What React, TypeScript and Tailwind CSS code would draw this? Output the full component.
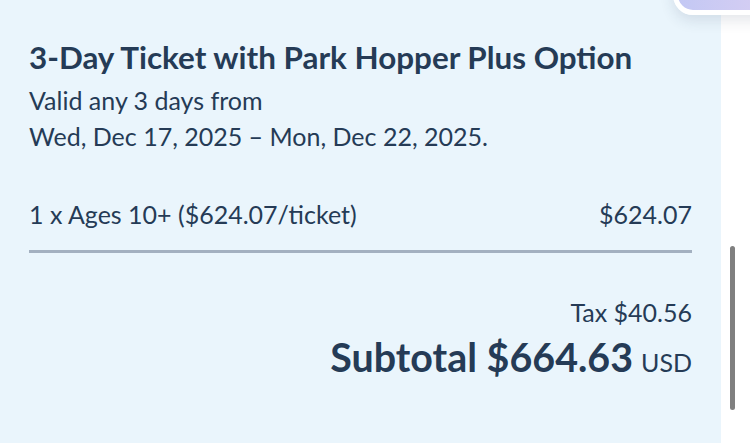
import React from "react";

export default function App() {
  return (
    <div className="relative w-[750px] h-[443px] overflow-hidden bg-white flex" style={{ fontFamily: "Lato, 'Noto Sans', sans-serif" }}>
      <div className="w-[721px] h-full bg-[#eaf5fc] px-[29px] pt-[39px] text-[#253b56]">
        <h1 className="text-[31.4px] font-bold leading-[36px]">3-Day Ticket with Park Hopper Plus Option</h1>
        <p className="text-[25px] leading-[36px] mt-[7px]">Valid any 3 days from</p>
        <p className="text-[25px] leading-[36px]">Wed, Dec 17, 2025 – Mon, Dec 22, 2025.</p>
        <div className="flex justify-between text-[25px] leading-[36px] mt-[42px]">
          <span>1 x Ages 10+ ($624.07/ticket)</span>
          <span>$624.07</span>
        </div>
        <div className="h-[3px] bg-[#a3b0c0] mt-[18px]" />
        <div className="flex flex-col items-end mt-[41px]">
          <div className="text-[25px] leading-[36px]">Tax $40.56</div>
          <div className="flex items-baseline gap-[8px] mt-[5px]">
            <span className="text-[39.4px] font-bold leading-[44px]">Subtotal $664.63</span>
            <span className="text-[25px]">USD</span>
          </div>
        </div>
      </div>
      <div className="flex-1 relative">
        <div className="absolute left-[9px] top-[246px] w-[5px] h-[164px] rounded-full bg-[#808080]" />
      </div>
      <div className="absolute left-[673px] top-[-40px] w-[130px] h-[55px] rounded-[20px] border-[5px] border-white bg-gradient-to-r from-[#c3c8f4] to-[#ddd0f2] shadow-[0_6px_14px_rgba(40,60,90,0.12)]" />
    </div>
  );
}
